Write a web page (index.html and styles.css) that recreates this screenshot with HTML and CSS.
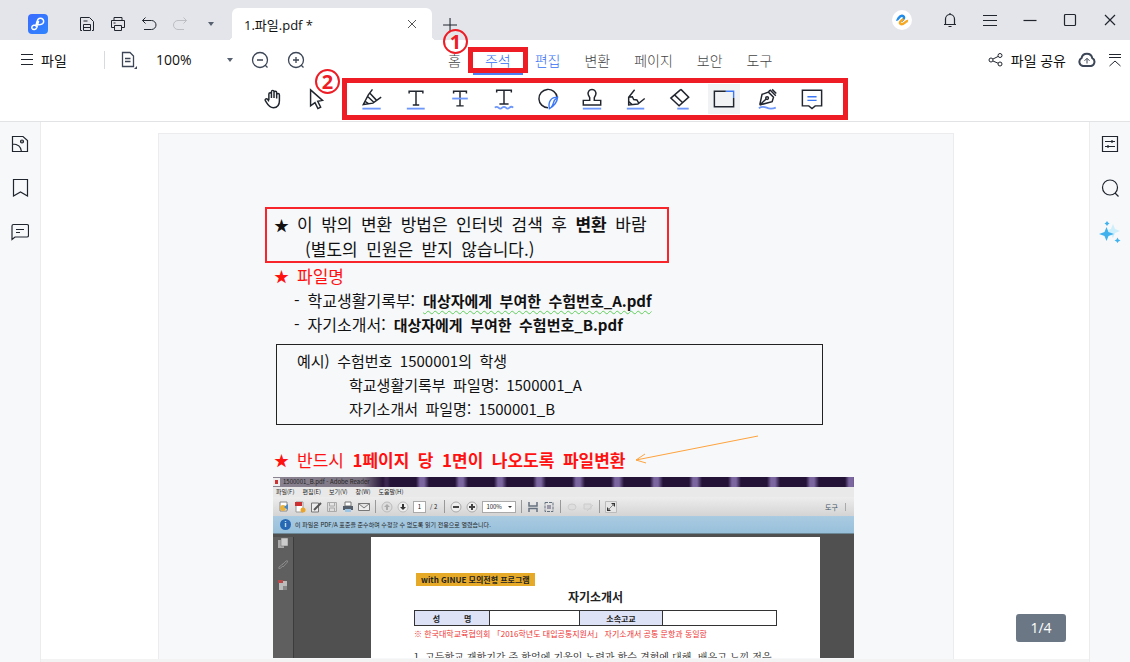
FILE: index.html
```html
<!DOCTYPE html>
<html lang="ko">
<head>
<meta charset="utf-8">
<title>1.파일.pdf</title>
<link rel="stylesheet" href="styles.css">
</head>
<body>
<div class="app">
  <header class="titlebar">
    <svg class="logo" viewBox="0 0 20 20" aria-hidden="true"><defs><linearGradient id="lg" x1="0" y1="0" x2="1" y2="1"><stop offset="0" stop-color="#3a6bff"/><stop offset="1" stop-color="#2f86ff"/></linearGradient></defs><rect width="20" height="20" rx="4" fill="url(#lg)"/><path d="M7.800 12L9.200 7C9.800 4.500 12 3.800 13.800 4.500C16 5.500 16.200 8 14.800 9.500C13.300 11 10.500 11 7.500 11C4.500 11 3.300 12.800 4 14.300C5 16 8 15.800 8.800 13.500L10.500 7.500" fill="none" stroke="#fff" stroke-width="1.5" stroke-linecap="round"/></svg>
    <div class="quick">
      <button class="icon-btn" aria-label="저장"><svg viewBox="0 0 16 16"><path d="M3 14.500H1.500V1.500H10.500L14.500 5.500V14.500H13M4.500 14.500V8.500H11.500V14.500ZM4.500 5H8.500M4.500 11.500H11.500"/></svg></button>
      <button class="icon-btn" aria-label="인쇄"><svg viewBox="0 0 16 16"><path d="M4 4.500V1.500H12V4.500M4 11.500H1.500V4.500H14.500V11.500H12M4.500 9.500H11.500V14.500H4.500ZM3.500 7H5.500"/></svg></button>
      <button class="icon-btn" aria-label="실행 취소"><svg viewBox="0 0 16 16"><path d="M4.500 1.500L1.500 4.500L4.500 7.500M1.500 4.500H10.500A4.300 4.300 0 0 1 10.500 13.500H3"/></svg></button>
      <button class="icon-btn faded" aria-label="다시 실행"><svg viewBox="0 0 16 16"><path d="M11.500 1.500L14.500 4.500L11.500 7.500M14.500 4.500H6A4.300 4.300 0 0 0 6 13.500H12"/></svg></button>
      <button class="icon-btn" aria-label="더보기"><span class="caret"></span></button>
    </div>
    <div class="doc-tab">
      <span>1.파일.pdf *</span>
      <button class="close-tab" aria-label="탭 닫기"><svg viewBox="0 0 10 10"><path d="M1 1L9 9M9 1L1 9"/></svg></button>
    </div>
    <button class="new-tab" aria-label="새 탭"><svg viewBox="0 0 14 14"><path d="M7.500 1V14M1 7.500H14"/></svg></button>
    <div class="window-tools">
      <svg class="avatar" viewBox="0 0 20 20" aria-hidden="true"><circle cx="10" cy="10" r="10" fill="#fff"/><path d="M4.500 9.500C6 10.500 7 5.500 10 5.800C14 6.500 11.500 9.500 9.500 11" fill="none" stroke="#1f8bea" stroke-width="2.400"/><path d="M11.500 9C8.500 11 6.500 13 9 14.200C12 15 13.500 10.500 16 11" fill="none" stroke="#f7a823" stroke-width="2.400"/></svg>
      <button class="win-btn" aria-label="알림"><svg viewBox="0 0 16 16"><path d="M3.500 12V7A4.500 4.500 0 0 1 12.500 7V12M2 12.500H14M6.500 14.500H9.500M8 1V2.500"/></svg></button>
      <button class="win-btn" aria-label="메뉴"><svg viewBox="0 0 16 16"><path d="M1 3.500H15M1 8.500H15M1 13.500H15"/></svg></button>
      <button class="win-btn" aria-label="최소화"><svg viewBox="0 0 16 16"><path d="M1.500 8.500H14.500"/></svg></button>
      <button class="win-btn" aria-label="최대화"><svg viewBox="0 0 16 16"><rect x="2.500" y="2.500" width="11" height="11" rx="1"/></svg></button>
      <button class="win-btn" aria-label="닫기"><svg viewBox="0 0 16 16"><path d="M3 3L13 13M13 3L3 13"/></svg></button>
    </div>
  </header>

  <div class="menubar">
    <button class="file-btn"><svg viewBox="0 0 12 13"><path d="M0 1.500H12M0 6.500H12M0 11.500H12"/></svg>파일</button>
    <div class="zoom-tools">
      <button class="plain" aria-label="페이지 보기"><svg class="i18" viewBox="0 0 18 18"><path d="M2.500 1.500H10L13.500 5V15.500H2.500ZM5 7.500H10.500M5 10.500H10.500"/><path class="corner" d="M17 15V18H14Z"/></svg></button>
      <button class="zoom-value"><span>100%</span><span class="caret"></span></button>
      <button class="plain" aria-label="축소"><svg class="i18" viewBox="0 0 18 18"><circle cx="9" cy="9" r="7.500"/><path d="M6 9H12M14 14L16.500 16.500"/></svg></button>
      <button class="plain" aria-label="확대"><svg class="i18" viewBox="0 0 18 18"><circle cx="9" cy="9" r="7.500"/><path d="M6 9H12M9 6V12M14 14L16.500 16.500"/></svg></button>
    </div>
    <nav class="tabs">
      <button>홈</button>
      <button class="active">주석</button>
      <button class="blue">편집</button>
      <button>변환</button>
      <button>페이지</button>
      <button>보안</button>
      <button>도구</button>
      <span class="mark mark-one">1</span>
    </nav>
    <div class="share">
      <button class="share-btn"><svg viewBox="0 0 15 15"><circle cx="3" cy="8" r="2"/><circle cx="12" cy="3.500" r="2"/><circle cx="12" cy="12" r="2"/><path d="M5 7L10 4.500M5 9L10 11.200"/></svg>파일 공유</button>
      <button class="plain" aria-label="클라우드"><svg class="i18 bold" viewBox="0 0 18 18"><path d="M5 15A4.200 4.200 0 0 1 3.500 7.200A5.500 5.500 0 0 1 14.300 7.200A4.200 4.200 0 0 1 13 15Z"/><path class="thin" d="M9 12.500V7.500M6.500 9.800L9 7.300L11.500 9.800"/></svg></button>
      <button class="plain" aria-label="도구 모음 접기"><svg class="i14" viewBox="0 0 14 14"><path d="M1 1.500H13M1 4.500H13M1.500 13L7 8L12.500 13"/></svg></button>
    </div>
  </div>

  <div class="toolbar">
    <div class="tool-group pointers">
      <button class="tool" aria-label="손"><svg viewBox="0 0 24 24"><path d="M7.500 13V6.500A1.400 1.400 0 0 1 10.300 6.500V11M10.300 6V4A1.400 1.400 0 0 1 13.100 4V11M13.100 5A1.400 1.400 0 0 1 16 5V11.500M16 7.500A1.400 1.400 0 0 1 19 7.500V14C19 19 16.500 21.500 12.500 21.500C8.500 21.500 7 19.500 5 16L3.500 13.500C3 12 5 11 6.200 12.500L7.500 14.500"/></svg></button>
      <button class="tool" aria-label="선택"><svg viewBox="0 0 24 24"><path d="M5 2L18 13.500L12.800 14.500L16 21L13 22.500L9.800 16L5 19.500Z"/></svg></button>
    </div>
    <div class="tool-group boxed">
      <button class="tool" aria-label="형광펜"><svg viewBox="0 0 24 24"><path class="u" d="M1.500 22.500H21.500"/><path d="M12.500 1.500L8 7.500L2.500 18L13 16.500L22 10M7 9L14.500 16M9.500 5.500L17 13.500M4.500 14.500L8 17"/></svg></button>
      <button class="tool" aria-label="밑줄"><svg viewBox="0 0 24 24"><path class="u" d="M2 22.500H21.500"/><path d="M4.500 6V3.500H19.500V6M12 3.500V18.500M8.500 18.500H15.500"/></svg></button>
      <button class="tool" aria-label="취소선"><svg viewBox="0 0 24 24"><path d="M5 6V3.500H19V6M12 3.500V19.500M8 19.500H16"/><path class="u" d="M3.500 11.500H20.500"/></svg></button>
      <button class="tool" aria-label="물결선"><svg viewBox="0 0 24 24"><path class="u" d="M2 21.500Q4 19.500 6 21.500T10 21.500T14 21.500T18 21.500T22 21.500"/><path d="M4 5V2.500H20V5M12 2.500V17M7 17.500H17"/></svg></button>
      <button class="tool" aria-label="스티커"><svg viewBox="0 0 24 24"><path d="M12 21.500A10 10 0 1 1 22 10"/><path class="b" d="M13.500 22.500C12 15 15 10 22.500 10C22 16 18 20 13.500 22.500ZM15.500 21C19 18 16.500 14 21.500 11"/></svg></button>
      <button class="tool" aria-label="스탬프"><svg viewBox="0 0 24 24"><path class="u" d="M2 22.500H22"/><path d="M2.500 18.500V13.500H9.500V10.500L8 7.500A4.300 4.300 0 1 1 16 7.500L14.500 10.500V13.500H21.500V18.500Z"/></svg></button>
      <button class="tool" aria-label="연필"><svg viewBox="0 0 24 24"><path class="u" d="M2 22.500H21"/><path d="M10.500 2L4 10V18.500L14 17.500L21.500 11.500M4 10L8 9.500L9.500 12.500L13 13L15 16.500M4.500 15L7.500 18"/></svg></button>
      <button class="tool" aria-label="지우개"><svg viewBox="0 0 24 24"><path class="u" d="M9 22.500H21.500"/><path d="M13 1.500L21.500 10L11 19.500L2 11L13 1.500M6 7.500L15 16"/></svg></button>
      <button class="tool selected" aria-label="사각형"><svg viewBox="0 0 24 24"><path d="M14 3.500H1.500V20.500H22.500V11"/><path class="b" d="M14 3.500H22.500V11"/></svg></button>
      <button class="tool" aria-label="서명"><svg viewBox="0 0 24 24"><path class="u" d="M2 22Q6 19.500 10.500 21.500T20.500 21.500"/><path d="M3 18.500L5.500 7L12.500 4.500L18 10L16.500 15L3 18.500L10 12M12.500 4.500L14 2.500M14 2L20.500 8.500M16.500 1.500L21 6"/><circle cx="11" cy="11" r="1.500"/></svg></button>
      <button class="tool" aria-label="메모"><svg viewBox="0 0 24 24"><path d="M1.500 2.500H22.500V19.500H15.500L12 22.500L8.500 19.500H1.500Z"/><path class="b" d="M7 9.500H17M7 13.500H17"/></svg></button>
      <span class="mark mark-two">2</span>
    </div>
  </div>

  <div class="workspace">
    <aside class="rail left">
      <button aria-label="썸네일"><svg viewBox="0 0 18 18"><path d="M1.500 1.500H12L16.500 5.500V16.500H1.500ZM1.500 9C7 9 10 12 10.500 16.500"/><circle cx="11" cy="6.500" r="1.500" fill="#aaa"/></svg></button>
      <button aria-label="책갈피"><svg viewBox="0 0 18 18"><path d="M2.500 .5H16.500V17L9.500 13L2.500 17Z"/></svg></button>
      <button aria-label="댓글"><svg viewBox="0 0 18 18"><path d="M1 16.500V3Q1 1.500 2.500 1.500H16Q17.500 1.500 17.500 3V12.500Q17.500 14 16 14H4ZM5 6.500H13M5 9.500H9"/></svg></button>
    </aside>
    <main class="canvas">
      <article class="page">
        <div class="notice">
          <p><span class="star">★</span>이&ensp;밖의&ensp;변환&ensp;방법은&ensp;인터넷&ensp;검색&ensp;후&ensp;<b>변환</b>&ensp;바람</p>
          <p class="second">(별도의&ensp;민원은&ensp;받지&ensp;않습니다.)</p>
        </div>
        <h2 class="heading"><span class="star">★</span>파일명</h2>
        <ul class="names">
          <li>-&ensp;학교생활기록부:&ensp;<b class="wavy">대상자에게&ensp;부여한&ensp;수험번호_A.pdf</b></li>
          <li>-&ensp;자기소개서:&ensp;<b>대상자에게&ensp;부여한&ensp;수험번호_B.pdf</b></li>
        </ul>
        <div class="example">
          <p>예시)&ensp;수험번호&ensp;1500001의&ensp;학생</p>
          <p class="inset">학교생활기록부&ensp;파일명:&ensp;1500001_A</p>
          <p class="inset">자기소개서&ensp;파일명:&ensp;1500001_B</p>
        </div>
        <h2 class="heading must"><span class="star">★</span>반드시&ensp;<b>1페이지&ensp;당&ensp;1면이&ensp;나오도록&ensp;파일변환</b>
          <svg class="arrow" viewBox="0 0 126 30" aria-hidden="true"><path d="M125 2L3 26M12 20L3 26L13 29"/></svg></h2>

        <section class="reader">
          <div class="r-title"><span class="r-pdf"></span>1500001_B.pdf - Adobe Reader</div>
          <div class="r-menu"><span>파일(F)</span><span>편집(E)</span><span>보기(V)</span><span>창(W)</span><span>도움말(H)</span></div>
          <div class="r-tools">
            <svg viewBox="0 0 12 12"><path d="M2 1H9V10H2Z" fill="#fff" stroke="#888"/><circle cx="5" cy="7" r="3" fill="#e9b23d"/><path d="M6 6L10 3V9Z" fill="#4486c8"/></svg>
            <svg viewBox="0 0 12 12"><path d="M2 1H9V11H2Z" fill="#fff" stroke="#999"/><path d="M1 1H8V5H1Z" fill="#cc3030"/><circle cx="9" cy="9" r="2.500" fill="#e9a52d"/></svg>
            <svg viewBox="0 0 12 12"><path d="M1.500 2H8.500V11H1.500Z" fill="#eee" stroke="#777"/><path d="M4 9L11 2" stroke="#555" stroke-width="2"/></svg>
            <svg viewBox="0 0 12 12"><path d="M1.500 1.500H10.500V10.500H1.500ZM3.500 1.500V5H8.500V1.500M3.500 10V7H8.500V10" fill="#ddd" stroke="#aaa"/></svg>
            <svg viewBox="0 0 12 12"><path d="M3 1H9V5H3Z" fill="#fff" stroke="#777"/><rect x="1" y="5" width="10" height="4" fill="#555f6b"/><path d="M3 8H9V11H3Z" fill="#9cc5e5"/></svg>
            <svg viewBox="0 0 12 12"><path d="M.5 2.500H11.500V9.500H.5ZM.5 2.500L6 7L11.500 2.500" fill="#eee" stroke="#777"/></svg>
            <i></i>
            <svg viewBox="0 0 12 12"><circle cx="6" cy="6" r="5" fill="#ddd" stroke="#bbb"/><path d="M6 3L9 6H7V9H5V6H3Z" fill="#aaa"/></svg>
            <svg viewBox="0 0 12 12"><circle cx="6" cy="6" r="5" fill="#eee" stroke="#bbb"/><path d="M6 9L9 6H7V3H5V6H3Z" fill="#333"/></svg>
            <span class="r-field">1</span><span class="r-total">/ 2</span>
            <i></i>
            <svg viewBox="0 0 12 12"><circle cx="6" cy="6" r="5" fill="#eee" stroke="#aaa"/><path d="M3 6H9" stroke="#444" stroke-width="2"/></svg>
            <svg viewBox="0 0 12 12"><circle cx="6" cy="6" r="5" fill="#eee" stroke="#aaa"/><path d="M3 6H9M6 3V9" stroke="#444" stroke-width="2"/></svg>
            <span class="r-field wide">100%<em></em></span>
            <i></i>
            <svg viewBox="0 0 12 12"><path d="M2 1V5H10V1M2 11V7.500H10V11" fill="none" stroke="#66717f" stroke-width="1.500"/></svg>
            <svg viewBox="0 0 12 12"><path d="M2 1.500H10V10.500H2Z" fill="none" stroke="#66717f" stroke-dasharray="3 1"/><path d="M4 4H8V8H4Z" fill="#99a"/></svg>
            <i></i>
            <svg viewBox="0 0 12 12"><ellipse cx="6" cy="6" rx="4" ry="3" fill="#ddd" stroke="#ccc"/></svg>
            <svg viewBox="0 0 12 12"><path d="M2 3H9V8H2ZM5 10L11 4" fill="#ddd" stroke="#ccc"/></svg>
            <i></i>
            <svg viewBox="0 0 12 12"><path d="M.5 .5H11.500V11.500H.5Z" fill="#e6e6e6" stroke="#bbb"/><path d="M6 2H10V6ZM2 6V10H6Z" fill="#333"/><path d="M3 9L9 3" stroke="#888"/></svg>
            <span class="r-side">도구</span>
          </div>
          <div class="r-info"><span class="r-badge">i</span>이 파일은 PDF/A 표준을 준수하며 수정할 수 없도록 읽기 전용으로 열렸습니다.</div>
          <div class="r-body">
            <div class="r-rail">
              <svg viewBox="0 0 12 12"><path d="M1 3H7V11H1Z" fill="#aaa"/><path d="M4 1H11V9H4Z" fill="#ccc" stroke="#666" stroke-width=".5"/></svg>
              <svg viewBox="0 0 12 12"><path d="M5 7L9 3Q11 2 10.500 4L6 9M7 5L2 9Q1 11 3 10.500L6 8" fill="none" stroke="#8b8b8b"/></svg>
              <svg viewBox="0 0 12 12"><path d="M2 2H10V11H2Z" fill="#bbb"/><path d="M1 1H6V4H1Z" fill="#b84a4a"/><path d="M6 7H10V11H6Z" fill="#888"/></svg>
            </div>
            <div class="r-paper">
              <span class="r-label">with GINUE 모의전형 프로그램</span>
              <h3>자기소개서</h3>
              <table><tr><th class="c1">성<span>명</span></th><td class="c2"></td><th class="c3">소속고교</th><td></td></tr></table>
              <p class="r-red">※ 한국대학교육협의회 「2016학년도 대입공통지원서」 자기소개서 공통 문항과 동일함</p>
              <p class="r-q">1. 고등학교 재학기간 중 학업에 기울인 노력과 학습 경험에 대해, 배우고 느낀 점을</p>
            </div>
          </div>
        </section>
      </article>
      <span class="page-count">1/4</span>
    </main>
    <aside class="rail right">
      <button aria-label="속성"><svg viewBox="0 0 18 18"><path d="M1.500 1.500H16.500V16.500H1.500ZM4 6.500H14M4 11.500H14M11 5V8M7 10V13"/></svg></button>
      <button aria-label="검색"><svg viewBox="0 0 18 18"><circle cx="9" cy="8.500" r="7.500"/><path d="M14 14L17.500 17.500"/></svg></button>
      <button aria-label="AI"><svg class="ai" viewBox="0 0 22 22"><path d="M14 3L16 8L21 10L16 12L14 17L11 12L9 9L12 8Z" fill="#cdeefb"/><path d="M7.500 6L9.500 11L15 13L9.500 15L7.500 20L5.500 15L0 13L5.500 11ZM8 0L9 1.500L10.500 2.500L9 3.500L8 5L7 3.500L5.500 2.500L7 1.500ZM18.500 16.500L19.500 18.500L21.500 19.500L19.500 20.500L18.500 22L17.500 20.500L15.500 19.500L17.500 18.500Z" fill="#3fb2ee"/></svg></button>
    </aside>
  </div>
</div>
</body>
</html>
```
FILE: styles.css
```css
* { box-sizing: border-box; }
body, p, h2, h3, ul { margin: 0; padding: 0; }
body { font-family: "Open Sans", "Noto Sans CJK KR", sans-serif; font-size: 14px; color: #111; background: #fff; }
button { border: 0; padding: 0; background: none; font: inherit; color: inherit; display: flex; align-items: center; justify-content: center; }
svg { fill: none; stroke: #20252e; stroke-width: 1; flex: none; display: block; }
.app { display: flex; flex-direction: column; height: 100vh; overflow: hidden; }

.titlebar { display: flex; height: 40px; flex: none; background: #e4e5ea; padding-left: 28px; }
.logo { width: 20px; height: 20px; margin-top: 14px; stroke: none; }
.quick { display: flex; gap: 15px; margin: 8px 13px 0 31px; height: 32px; }
.icon-btn { width: 16px; }
.icon-btn svg { width: 16px; height: 16px; }
.faded { opacity: .2; }
.caret { width: 0; height: 0; border: 3px solid transparent; border-top: 4px solid #566070; border-bottom: 0; }
.doc-tab { width: 200px; height: 32px; margin-top: 8px; background: #fff; border-radius: 6px 6px 0 0; display: flex; align-items: center; justify-content: space-between; padding: 0 15px 0 12px; position: relative; font-size: 13px; }
.doc-tab::before, .doc-tab::after { content: ""; position: absolute; bottom: 0; width: 4px; height: 4px; }
.doc-tab::before { left: -4px; background: radial-gradient(circle at 0 0, transparent 4px, #fff 4px); }
.doc-tab::after { right: -4px; background: radial-gradient(circle at 100% 0, transparent 4px, #fff 4px); }
.close-tab svg { width: 10px; height: 10px; stroke: #555; }
.new-tab { margin: 8px 0 0 10px; height: 32px; width: 15px; }
.new-tab svg { width: 15px; height: 15px; }
.window-tools { display: flex; align-items: center; margin-left: auto; }
.avatar { width: 20px; height: 20px; margin-right: 18px; stroke: none; }
.win-btn { width: 40px; height: 40px; }
.win-btn svg { width: 16px; height: 16px; stroke-width: 1.2; }

.menubar { display: flex; align-items: center; height: 39px; flex: none; padding: 0 8px 0 21px; }
.file-btn { gap: 8px; width: 84px; justify-content: flex-start; border-right: 1px solid #d9dadd; height: 18px; }
.file-btn svg { width: 12px; height: 13px; }
.zoom-tools { display: flex; align-items: center; margin-left: 15px; gap: 18px; }
.i18 { width: 18px; height: 18px; stroke: #3c4656; stroke-width: 1.3; }
.i14 { width: 14px; height: 14px; }
.corner { fill: #3c4656; stroke: none; }
.zoom-value { width: 77px; justify-content: space-between; }
.bold { stroke-width: 2; }
.bold .thin { stroke-width: 1; }
.tabs { display: flex; align-items: center; gap: 24px; margin-left: 143px; position: relative; font-weight: 300; color: #444; height: 40px; }
.tabs button { height: 26px; position: relative; }
.blue, .active { color: #3470f5; }
.tabs .blue, .tabs .active { color: #3470f5; }
.tabs .active::before { content: ""; position: absolute; inset: auto -12px -2px; height: 3px; background: #4c7df5; }
.tabs .active::after { content: ""; position: absolute; inset: 0 -17px; border: 5px solid #ee1c25; }
.mark { position: absolute; width: 25px; height: 25px; border: 2px solid #ee1c25; border-radius: 50%; background: #fff; color: #ee1c25; font-weight: 700; font-size: 20px; line-height: 21px; text-align: center; }
.mark-one { left: -5px; top: -11px; background: none; }
.mark-two { left: -41px; top: -10px; }
.share { display: flex; align-items: center; gap: 12px; margin-left: auto; }
.share-btn { gap: 8px; }
.share-btn svg { width: 15px; height: 15px; }

.toolbar { display: flex; justify-content: center; align-items: center; height: 43px; flex: none; border-bottom: 1px solid #e2e3e5; padding: 0 45px 2px 0; gap: 23px; }
.tool-group { display: flex; gap: 12px; align-items: center; }
.boxed { position: relative; height: 40px; }
.boxed::after { content: ""; position: absolute; inset: -1px -20px -1px -14px; border: 5px solid #ee1c25; pointer-events: none; }
.tool { width: 32px; height: 30px; }
.tool svg { width: 22px; height: 22px; stroke-width: 1.6; }
.tool .u { stroke: #6d97fb; stroke-width: 2; }
.tool .b { stroke: #3c78f5; stroke-width: 1.5; }
.selected { background: #f1f2f4; }

.workspace { display: flex; flex: 1; min-height: 0; }
.rail { width: 41px; background: #f7f8fa; display: flex; flex-direction: column; align-items: center; padding-top: 12px; gap: 24px; flex: none; }
.rail svg { width: 18px; height: 18px; stroke-width: 1.2; }
.rail button { width: 20px; height: 20px; }
.left { border-right: 1px solid #ececee; }
.right { border-left: 1px solid #ececee; }
.rail .ai { width: 22px; height: 22px; stroke: none; }
.canvas { flex: 1; min-width: 0; position: relative; padding: 11px 18px 0 0; display: flex; justify-content: center; overflow: hidden; border-bottom: 3px solid #f3f3f4; }
.page { width: 796px; flex: none; background: #f7f8fa; border: 1px solid #ececee; border-bottom: 0; padding: 73px 99px 0 106px; font-family: "Noto Sans CJK KR", sans-serif; color: #111; white-space: nowrap; }
.notice { width: 404px; border: 2px solid #f8252b; padding: 2px 0 0 7px; font-size: 17px; line-height: 25px; }
.star { display: inline-block; width: 23px; font-size: 15px; line-height: 1; }
.second { padding-left: 31px; }
.heading { font-size: 17px; font-weight: 400; line-height: 25px; color: #f11; padding-left: 9px; display: flex; align-items: center; }
.names { list-style: none; padding-left: 29px; font-size: 16px; line-height: 24px; }
.names li { height: 24px; }
.names b { font-size: 15px; }
.wavy { text-decoration: underline wavy #5fcf5a 1px; text-underline-offset: 3px; }
.example { width: 547px; margin: 8px 0 0 11px; border: 1px solid #222; padding: 4px 0 3px 20px; font-size: 15px; line-height: 24px; }
.inset { padding-left: 52px; }
.must { margin-top: 22px; }
.arrow { width: 126px; height: 30px; stroke: #ffa33c; margin: -22px 0 0 8px; }

.reader { width: 581px; height: 181px; margin: 5px 0 0 8px; display: flex; flex-direction: column; overflow: hidden; font-size: 6px; line-height: 8px; color: #222; background: #505050; }
.reader svg { stroke: none; width: 12px; height: 12px; }
.r-title { height: 10px; display: flex; align-items: center; gap: 3px; background: linear-gradient(90deg, #8a8391 0, #7d7583 90px, #281538 110px, transparent 120px), repeating-linear-gradient(90deg, #241336 0 26px, #7c66a0 30px 34px, #241336 39px); }
.r-pdf { width: 7px; height: 8px; background: #c33; border: 2px solid #eee; }
.r-menu { height: 10px; display: flex; align-items: center; gap: 8px; padding-left: 3px; background: #e9e9e9; }
.r-tools { height: 19px; display: flex; align-items: center; gap: 4px; padding-left: 5px; background: linear-gradient(#ededed, #d4d4d4); }
.r-tools i { width: 1px; height: 13px; background: #999; margin: 0 1px; }
.r-field { width: 13px; height: 12px; background: #fff; border: 1px solid #aaa; text-align: center; line-height: 10px; }
.r-field.wide { width: 34px; display: flex; justify-content: space-between; align-items: center; padding: 0 3px; }
.r-field em { border: 2px solid transparent; border-top-color: #333; border-bottom: 0; }
.r-total { margin-right: 2px; }
.r-side { margin-left: auto; margin-right: 8px; border-right: 1px solid #aaa; padding-right: 7px; color: #456; font-size: 7px; }
.r-info { height: 18px; display: flex; align-items: center; gap: 4px; padding-left: 7px; background: linear-gradient(#aacbe2, #98c0da); border-bottom: 1px solid #6c8796; }
.r-badge { width: 11px; height: 11px; border-radius: 50%; background: #2768b4; color: #fff; font-weight: 700; text-align: center; line-height: 11px; }
.r-body { flex: 1; min-height: 0; display: flex; padding-top: 3px; }
.r-rail { width: 21px; border-right: 1px solid #3c3c3c; background: #5f5f5f; display: flex; flex-direction: column; align-items: center; gap: 9px; }
.r-paper { width: 449px; margin-left: 77px; background: #fff; padding: 36px 43px 0; display: flex; flex-direction: column; align-items: flex-start; overflow: hidden; }
.r-label { background: #e6aa28; font-size: 8px; font-weight: 700; line-height: 13px; padding: 0 5px; margin-left: 2px; }
.r-paper h3 { align-self: center; font-size: 12px; line-height: 14px; margin: 4px 0 6px; }
.r-paper table { width: 100%; flex: none; border-collapse: collapse; table-layout: fixed; font-size: 8px; line-height: 13px; }
.r-paper th, .r-paper td { border: 1px solid #333; padding: 0; height: 15px; }
.r-paper th { background: #dde2f6; }
.r-paper th span { margin-left: 24px; }
.c1 { width: 75px; }
.c2 { width: 90px; }
.c3 { width: 83px; }
.r-red { color: #e33; font-size: 8px; line-height: 10px; margin-top: 3px; }
.r-q { font-family: "Noto Serif CJK KR", "Noto Sans CJK KR", serif; font-size: 10px; line-height: 12px; margin-top: 12px; }
.page-count { position: absolute; right: 23px; bottom: 17px; width: 50px; height: 28px; border-radius: 3px; background: #6c7786; color: #fff; text-align: center; line-height: 28px; font-family: "Open Sans", sans-serif; }
```
